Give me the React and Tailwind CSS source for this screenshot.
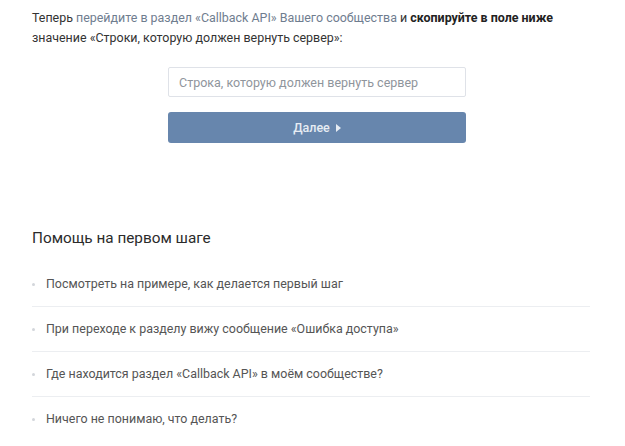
import { Fragment } from 'react';

const HELP_ITEMS = [
  'Посмотреть на примере, как делается первый шаг',
  'При переходе к разделу вижу сообщение «Ошибка доступа»',
  'Где находится раздел «Callback API» в моём сообществе?',
  'Ничего не понимаю, что делать?',
];

function ArrowRight() {
  return (
    <svg width="5" height="8" viewBox="0 0 5 8" className="ml-[6px] mt-[1px]">
      <path d="M0 0 L5 4 L0 8 Z" fill="currentColor" />
    </svg>
  );
}

export default function App() {
  return (
    <div className="min-h-[446px] w-full bg-white px-[32px] pt-[8px] font-['Roboto',sans-serif] text-[12.45px] leading-[20px] text-[#333]">
      {/* Intro */}
      <p>
        Теперь <span className="text-[#6f7d8f]">перейдите в раздел «Callback API» Вашего сообщества</span> и{' '}
        <b className="font-bold text-[#222]">скопируйте в поле ниже</b>
        <br />
        значение «Строки, которую должен вернуть сервер»:
      </p>

      {/* Form */}
      <div className="ml-[136px] mt-[19px] flex w-[298px] flex-col gap-[15px]">
        <input
          type="text"
          placeholder="Строка, которую должен вернуть сервер"
          className="h-[30px] w-full rounded-[2px] border border-[#dfe2e8] px-[10px] text-[12.5px] text-[#333] outline-none placeholder:text-[#8f959c]"
        />
        <button className="flex h-[31px] w-full items-center justify-center rounded-[3px] bg-[#6786ad] text-[12.5px] font-medium text-[#e6ecf3]">
          Далее
          <ArrowRight />
        </button>
      </div>

      {/* Help */}
      <h2 className="mt-[85px] text-[15.3px] leading-[20px] text-[#2b2b2b]">Помощь на первом шаге</h2>
      <ul className="mt-[14px] w-[558px]">
        {HELP_ITEMS.map((item, i) => (
          <Fragment key={i}>
            <li
              className={`flex items-center py-[12px] text-[#555] ${
                i < HELP_ITEMS.length - 1 ? 'border-b border-[#eceef1]' : ''
              }`}
            >
              <span className="h-[3px] w-[3px] shrink-0 rounded-full bg-[#d3d6db]" />
              <span className="ml-[11px]">{item}</span>
            </li>
          </Fragment>
        ))}
      </ul>
    </div>
  );
}
